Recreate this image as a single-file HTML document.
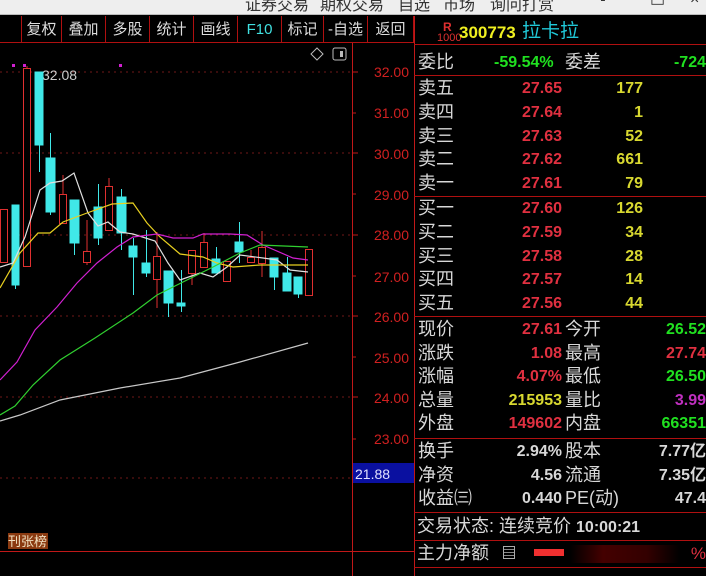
<!DOCTYPE html>
<html><head><meta charset="utf-8"><style>
*{margin:0;padding:0;box-sizing:border-box}
body{width:706px;height:576px;background:#000;overflow:hidden;position:relative;font-family:"Liberation Sans","Noto Sans CJK SC",sans-serif}
.top{position:absolute;left:0;top:0;width:706px;height:15px;background:#eeeeee;border-bottom:1px solid #bbb;overflow:hidden}
.top span{position:absolute;top:-9px;font-size:16px;color:#333}
.tb{position:absolute;top:16px;height:27px;border-right:1px solid #b01010;border-bottom:1px solid #b01010;color:#ddd;font-size:15px;line-height:27px;text-align:center}
.r{position:absolute;font-size:17px;line-height:23px;white-space:nowrap}
.lab{color:#d8d8d8;font-size:18px}
.hl{position:absolute;left:414px;width:292px;height:1px;background:#b01010}
</style></head><body>
<div class="top"><span style="left:245px">证券交易</span><span style="left:320px">期权交易</span><span style="left:398px">自选</span><span style="left:443px">市场</span><span style="left:490px">询问打赏</span><span style="left:600px">▪</span><span style="left:650px">▭</span><span style="left:690px">×</span></div>
<div class="tb" style="left:0;width:22px"></div>
<div class="tb" style="left:22px;width:40px">复权</div>
<div class="tb" style="left:62px;width:44px">叠加</div>
<div class="tb" style="left:106px;width:44px">多股</div>
<div class="tb" style="left:150px;width:44px">统计</div>
<div class="tb" style="left:194px;width:44px">画线</div>
<div class="tb" style="left:238px;width:44px;color:#40e0e0">F10</div>
<div class="tb" style="left:282px;width:42px">标记</div>
<div class="tb" style="left:324px;width:44px">-自选</div>
<div class="tb" style="left:368px;width:46px">返回</div>

<svg style="position:absolute;left:0;top:0" width="706" height="576">
<g stroke="#701818" stroke-dasharray="2,4" stroke-width="1">
<line x1="0" y1="72" x2="352" y2="72"/><line x1="0" y1="153" x2="352" y2="153"/><line x1="0" y1="235" x2="352" y2="235"/><line x1="0" y1="316" x2="352" y2="316"/><line x1="0" y1="397" x2="352" y2="397"/><line x1="0" y1="478" x2="352" y2="478"/>
</g>
<g stroke="#c01818" stroke-width="1">
<line x1="352.5" y1="43" x2="352.5" y2="576"/><line x1="414.5" y1="16" x2="414.5" y2="576"/>
<line x1="0" y1="551.5" x2="414" y2="551.5"/>
</g>
<g stroke="#c01818"><line x1="352" y1="72" x2="358" y2="72"/><line x1="352" y1="113" x2="356" y2="113"/><line x1="352" y1="153" x2="358" y2="153"/><line x1="352" y1="194" x2="356" y2="194"/><line x1="352" y1="235" x2="358" y2="235"/><line x1="352" y1="276" x2="356" y2="276"/><line x1="352" y1="316" x2="358" y2="316"/><line x1="352" y1="357" x2="356" y2="357"/><line x1="352" y1="397" x2="358" y2="397"/><line x1="352" y1="439" x2="356" y2="439"/></g>
<g fill="#d02020" font-size="14" text-anchor="end" font-family="Liberation Sans">
<text x="409" y="77">32.00</text><text x="409" y="118">31.00</text><text x="409" y="159">30.00</text><text x="409" y="200">29.00</text><text x="409" y="240">28.00</text><text x="409" y="282">27.00</text><text x="409" y="322">26.00</text><text x="409" y="363">25.00</text><text x="409" y="403">24.00</text><text x="409" y="444">23.00</text>
</g>
<rect x="353" y="463" width="61" height="20" fill="#0a10a0"/>
<text x="355" y="479" fill="#e0e0ff" font-size="14" font-family="Liberation Sans">21.88</text>
<path d="M317 48l6 6-6 6-6-6z" fill="none" stroke="#bbb"/>
<rect x="333" y="48" width="13" height="12" rx="2" fill="none" stroke="#bbb"/><rect x="340" y="51" width="3" height="6" fill="#bbb"/>
<g fill="#d020d0"><rect x="12" y="64" width="3" height="3"/><rect x="23" y="64" width="3" height="3"/><rect x="119" y="64" width="3" height="3"/></g>
<text x="42" y="80" fill="#ccc" font-size="14" font-family="Liberation Sans">32.08</text>
<g stroke="#40e8e8" fill="#40e8e8">
<line x1="15.5" y1="205" x2="15.5" y2="289"/><rect x="12" y="205" width="7" height="80"/>
<line x1="39.5" y1="72" x2="39.5" y2="172"/><rect x="35" y="72" width="8" height="73"/>
<line x1="50.5" y1="133" x2="50.5" y2="215"/><rect x="46" y="158" width="9" height="54"/>
<line x1="74.5" y1="200" x2="74.5" y2="255"/><rect x="70" y="200" width="9" height="43"/>
<line x1="98.5" y1="184" x2="98.5" y2="245"/><rect x="94" y="207" width="8" height="31"/>
<line x1="121.5" y1="189" x2="121.5" y2="250"/><rect x="117" y="197" width="9" height="36"/>
<line x1="133.5" y1="238" x2="133.5" y2="295"/><rect x="129" y="246" width="8" height="11"/>
<line x1="146.5" y1="230" x2="146.5" y2="277"/><rect x="142" y="263" width="8" height="10"/>
<line x1="168.5" y1="271" x2="168.5" y2="317"/><rect x="164" y="271" width="9" height="32"/>
<line x1="181.5" y1="270" x2="181.5" y2="312"/><rect x="177" y="303" width="8" height="3"/>
<line x1="216.5" y1="247" x2="216.5" y2="273"/><rect x="212" y="259" width="8" height="14"/>
<line x1="239.5" y1="222" x2="239.5" y2="263"/><rect x="235" y="242" width="8" height="10"/>
<line x1="274.5" y1="258" x2="274.5" y2="290"/><rect x="270" y="258" width="8" height="19"/>
<line x1="287.5" y1="257" x2="287.5" y2="291"/><rect x="283" y="273" width="8" height="18"/>
<line x1="298.5" y1="277" x2="298.5" y2="298"/><rect x="294" y="277" width="8" height="17"/>
</g>
<g stroke="#e03030" fill="#000">
<rect x="0.5" y="209.5" width="7" height="53"/>
<line x1="27" y1="66" x2="27" y2="68"/><rect x="23.5" y="68.5" width="7" height="198"/>
<line x1="63" y1="175" x2="63" y2="194"/><rect x="59.5" y="194.5" width="7" height="29"/>
<line x1="87" y1="220" x2="87" y2="265"/><rect x="83.5" y="251.5" width="7" height="11"/>
<line x1="109" y1="178" x2="109" y2="186"/><rect x="105.5" y="186.5" width="7" height="44"/>
<line x1="157" y1="232" x2="157" y2="308"/><rect x="153.5" y="256.5" width="7" height="23"/>
<line x1="192" y1="273" x2="192" y2="285"/><rect x="188.5" y="250.5" width="7" height="23"/>
<line x1="204" y1="233" x2="204" y2="242"/><rect x="200.5" y="242.5" width="7" height="25"/>
<rect x="223.5" y="261.5" width="7" height="20"/>
<line x1="251" y1="250" x2="251" y2="257"/><rect x="247.5" y="257.5" width="7" height="5"/>
<line x1="262" y1="231" x2="262" y2="277"/><rect x="258.5" y="247.5" width="7" height="16"/>
<rect x="305.5" y="249.5" width="7" height="46"/>
</g>
<g fill="none" stroke-width="1.2">
<polyline stroke="#e0e0e0" points="0,267 13,263 25,237 40,190 50,183 62,181 74,173 88,213 98,226 108,222 120,232 133,234 155,241 168,263 180,280 200,273 213,277 227,267 240,255 263,258 277,260 290,270 308,272"/>
<polyline stroke="#e8d020" points="0,288 20,253 38,233 50,233 63,222 87,213 112,204 133,203 147,223 160,237 180,254 203,257 217,263 233,267 260,265 308,265"/>
<polyline stroke="#d020d0" points="0,380 17,362 35,330 57,307 77,283 97,263 117,247 133,237 157,234 173,238 193,238 203,234 230,234 247,235 263,245 293,258 308,260"/>
<polyline stroke="#30d030" points="0,415 15,406 33,385 60,360 95,338 133,313 157,295 187,280 213,267 240,253 260,245 308,247"/>
<polyline stroke="#c8c8c8" points="0,421 20,415 60,400 120,388 180,378 240,362 308,343"/>
</g>
<rect x="8" y="533" width="40" height="16" fill="#8a3a10"/>
<text x="8" y="546" fill="#f0e0c0" font-size="13" font-family="Noto Sans CJK SC">刊张榜</text>
</svg>

<div class="hl" style="top:44px"></div>
<div class="hl" style="top:75px"></div>
<div class="hl" style="top:196px"></div>
<div class="hl" style="top:316px"></div>
<div class="hl" style="top:438px"></div>
<div class="hl" style="top:512px"></div>
<div class="hl" style="top:540px"></div>
<div class="hl" style="top:567px"></div>

<div class="r" style="left:443px;top:21px;font-size:12px;line-height:12px;color:#e03030;font-weight:bold">R</div>
<div class="r" style="left:437px;top:33px;font-size:11px;line-height:11px;color:#e03030">1000</div>
<div class="r" style="left:459px;top:21px;color:#f0f020;font-weight:bold">300773</div>
<div class="r" style="left:522px;top:20px;color:#20c8d8;font-size:19px">拉卡拉</div>

<div class="r lab" style="left:418px;top:51px">委比</div>
<div class="r" style="left:494px;top:51px;color:#20e020;font-weight:bold;font-size:16px">-59.54%</div>
<div class="r lab" style="left:565px;top:51px">委差</div>
<div class="r" style="right:0;top:51px;color:#20e020;font-weight:bold;font-size:16px">-724</div>

<div class="r lab" style="left:418px;top:77px;line-height:23.8px">卖五<br>卖四<br>卖三<br>卖二<br>卖一</div>
<div class="r" style="left:510px;top:77px;line-height:23.8px;color:#e03040;font-weight:bold;font-size:16px;text-align:right;width:52px">27.65<br>27.64<br>27.63<br>27.62<br>27.61</div>
<div class="r" style="left:590px;top:77px;line-height:23.8px;color:#d8d830;font-weight:bold;font-size:16px;text-align:right;width:53px">177<br>1<br>52<br>661<br>79</div>

<div class="r lab" style="left:418px;top:197px;line-height:23.8px">买一<br>买二<br>买三<br>买四<br>买五</div>
<div class="r" style="left:510px;top:197px;line-height:23.8px;color:#e03040;font-weight:bold;font-size:16px;text-align:right;width:52px">27.60<br>27.59<br>27.58<br>27.57<br>27.56</div>
<div class="r" style="left:590px;top:197px;line-height:23.8px;color:#d8d830;font-weight:bold;font-size:16px;text-align:right;width:53px">126<br>34<br>28<br>14<br>44</div>

<div class="r lab" style="left:418px;top:318px;line-height:23.6px">现价<br>涨跌<br>涨幅<br>总量<br>外盘</div>
<div class="r" style="left:480px;top:318px;line-height:23.6px;font-weight:bold;font-size:16px;text-align:right;width:82px"><span style="color:#e03040">27.61</span><br><span style="color:#e03040">1.08</span><br><span style="color:#e03040">4.07%</span><br><span style="color:#d8d830">215953</span><br><span style="color:#e03040">149602</span></div>
<div class="r lab" style="left:565px;top:318px;line-height:23.6px">今开<br>最高<br>最低<br>量比<br>内盘</div>
<div class="r" style="right:0;top:318px;line-height:23.6px;font-weight:bold;font-size:16px;text-align:right"><span style="color:#20e020">26.52</span><br><span style="color:#e03040">27.74</span><br><span style="color:#20e020">26.50</span><br><span style="color:#c030c0">3.99</span><br><span style="color:#20e020">66351</span></div>

<div class="r lab" style="left:418px;top:440px;line-height:23.6px">换手<br>净资<br>收益㈢</div>
<div class="r" style="left:480px;top:440px;line-height:23.6px;font-weight:bold;font-size:16px;text-align:right;width:82px;color:#d8d8d8">2.94%<br>4.56<br>0.440</div>
<div class="r lab" style="left:565px;top:440px;line-height:23.6px">股本<br>流通<br>PE(动)</div>
<div class="r" style="right:0;top:440px;line-height:23.6px;font-weight:bold;font-size:16px;text-align:right;color:#d8d8d8">7.77亿<br>7.35亿<br>47.4</div>

<div class="r lab" style="left:417px;top:515px">交易状态: 连续竞价 <b style="font-size:16px">10:00:21</b></div>
<div class="r lab" style="left:417px;top:542px">主力净额</div>
<div style="position:absolute;left:503px;top:546px;width:12px;height:13px;border:1px solid #aaa;background:repeating-linear-gradient(#000 0 2px,#888 2px 3px)"></div>
<div style="position:absolute;left:534px;top:549px;width:30px;height:7px;background:#f03030"></div>
<div style="position:absolute;left:570px;top:545px;width:110px;height:18px;background:linear-gradient(90deg,#000,#400 30%,#300 70%,#000)"></div>
<div class="r" style="right:0;top:542px;color:#e03040">%</div>
</body></html>
